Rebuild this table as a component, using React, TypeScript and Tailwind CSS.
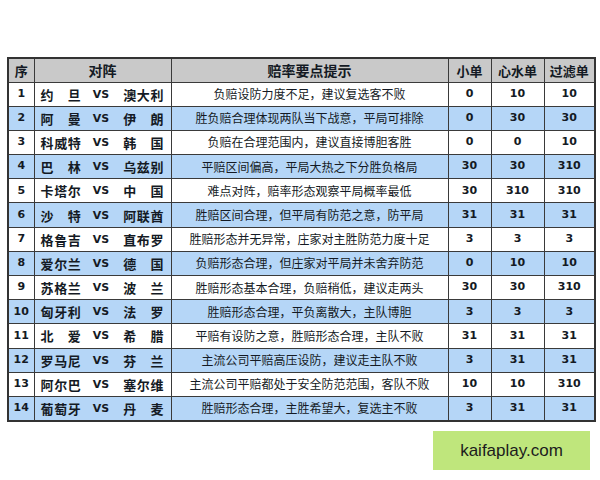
const rows = [
  { no: 1, home: '约旦', away: '澳大利', tip: '负赔设防力度不足，建议复选客不败', a: '0', b: '10', c: '10' },
  { no: 2, home: '阿曼', away: '伊朗', tip: '胜负赔合理体现两队当下战意，平局可排除', a: '0', b: '30', c: '30' },
  { no: 3, home: '科威特', away: '韩国', tip: '负赔在合理范围内，建议直接博胆客胜', a: '0', b: '0', c: '10' },
  { no: 4, home: '巴林', away: '乌兹别', tip: '平赔区间偏高，平局大热之下分胜负格局', a: '30', b: '30', c: '310' },
  { no: 5, home: '卡塔尔', away: '中国', tip: '难点对阵，赔率形态观察平局概率最低', a: '30', b: '310', c: '310' },
  { no: 6, home: '沙特', away: '阿联酋', tip: '胜赔区间合理，但平局有防范之意，防平局', a: '31', b: '31', c: '31' },
  { no: 7, home: '格鲁吉', away: '直布罗', tip: '胜赔形态并无异常，庄家对主胜防范力度十足', a: '3', b: '3', c: '3' },
  { no: 8, home: '爱尔兰', away: '德国', tip: '负赔形态合理，但庄家对平局并未舍弃防范', a: '0', b: '10', c: '10' },
  { no: 9, home: '苏格兰', away: '波兰', tip: '胜赔形态基本合理，负赔稍低，建议走两头', a: '30', b: '30', c: '310' },
  { no: 10, home: '匈牙利', away: '法罗', tip: '胜赔形态合理，平负离散大，主队博胆', a: '3', b: '3', c: '3' },
  { no: 11, home: '北爱', away: '希腊', tip: '平赔有设防之意，胜赔形态合理，主队不败', a: '31', b: '31', c: '31' },
  { no: 12, home: '罗马尼', away: '芬兰', tip: '主流公司平赔高压设防，建议走主队不败', a: '3', b: '31', c: '31' },
  { no: 13, home: '阿尔巴', away: '塞尔维', tip: '主流公司平赔都处于安全防范范围，客队不败', a: '10', b: '10', c: '310' },
  { no: 14, home: '葡萄牙', away: '丹麦', tip: '胜赔形态合理，主胜希望大，复选主不败', a: '3', b: '31', c: '31' },
];

const cjk = "font-['Noto_Sans_CJK_SC',sans-serif]";
const num = "font-['DejaVu_Sans',sans-serif]";

function Name({ text }: { text: string }) {
  return (
    <span className="flex w-[41px] justify-between">
      {text.split('').map((ch, i) => (
        <span key={i}>{ch}</span>
      ))}
    </span>
  );
}

export default function App() {
  const cell = 'border border-[#3a3a3a] text-center';
  return (
    <div className="w-[600px] h-[480px] bg-white relative">
      <div className="pt-[57px] pl-[7px]">
        <table className="border-collapse table-fixed w-[587px] border-2 border-[#333] text-[#141a24]">
          <colgroup>
            <col className="w-[26px]" />
            <col className="w-[137px]" />
            <col className="w-[277px]" />
            <col className="w-[43px]" />
            <col className="w-[53px]" />
            <col className="w-[51px]" />
          </colgroup>
          <thead>
            <tr className={`h-[24px] bg-[#c9c9c9] ${cjk} font-bold text-[13px]`}>
              <th className={cell}>序</th>
              <th className={`${cell} text-[14px]`}>对阵</th>
              <th className={`${cell} text-[14px]`}>赔率要点提示</th>
              <th className={cell}>小单</th>
              <th className={cell}>心水单</th>
              <th className={cell}>过滤单</th>
            </tr>
          </thead>
          <tbody>
            {rows.map((r) => (
              <tr
                key={r.no}
                className={`h-[24.2px] ${r.no % 2 === 0 ? 'bg-[#b5d6f7]' : 'bg-white'}`}
              >
                <td className={`${cell} ${num} font-bold text-[11px]`}>{r.no}</td>
                <td className={`${cell} ${cjk} font-bold text-[13px]`}>
                  <div className="flex items-center pl-[6px] pr-[7px] leading-none">
                    <Name text={r.home} />
                    <span className={`${num} text-[11px] ml-[12px] mr-[14px]`}>VS</span>
                    <Name text={r.away} />
                  </div>
                </td>
                <td className={`${cell} ${cjk} text-[12px] whitespace-nowrap`}>{r.tip}</td>
                <td className={`${cell} ${num} font-bold text-[11px]`}>{r.a}</td>
                <td className={`${cell} ${num} font-bold text-[11px]`}>{r.b}</td>
                <td className={`${cell} ${num} font-bold text-[11px]`}>{r.c}</td>
              </tr>
            ))}
          </tbody>
        </table>
      </div>
      <div className="absolute left-[433px] top-[431px] w-[157px] h-[39px] bg-[#bfe67c] flex items-center justify-center">
        <span className="font-['Liberation_Sans',sans-serif] text-[17px] text-[#1c1c1c]">kaifaplay.com</span>
      </div>
    </div>
  );
}
